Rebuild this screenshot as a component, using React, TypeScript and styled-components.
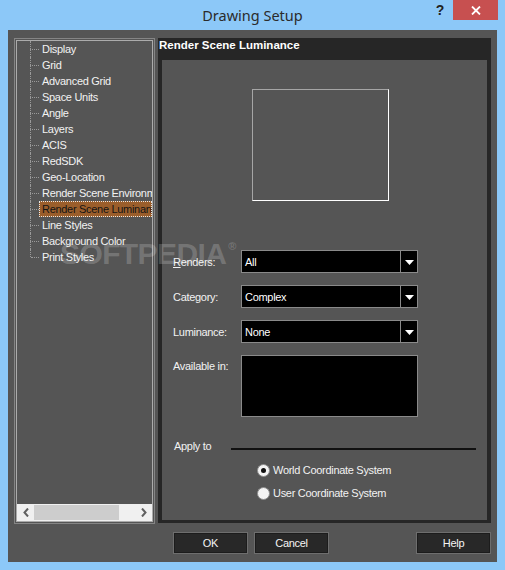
import React from "react";
import styled, { createGlobalStyle, css } from "styled-components";

const Global = createGlobalStyle`
  html, body { margin: 0; padding: 0; background: #8cc8f8; }
  body { font-family: "Liberation Sans", Arial, sans-serif; }
  * { box-sizing: border-box; }
`;

const Window = styled.div`
  position: relative;
  width: 505px;
  height: 570px;
  background: #8cc8f8;
  display: flex;
  flex-direction: column;
  overflow: hidden;
`;

const TitleBar = styled.div`
  height: 30px;
  flex: none;
  display: grid;
  grid-template-columns: 1fr auto 1fr;
  align-items: start;
`;

const TitleText = styled.div`
  font-family: "Noto Sans", "Open Sans", sans-serif;
  font-size: 14.5px;
  line-height: 30px;
  color: #2b2b2b;
`;

const Controls = styled.div`
  display: flex;
  justify-content: flex-end;
  padding-right: 7px;
`;

const HelpGlyph = styled.div`
  width: 26px;
  height: 20px;
  display: flex;
  align-items: center;
  justify-content: center;
  font-family: "Liberation Sans", Arial, sans-serif;
  font-weight: bold;
  font-size: 14px;
  color: #222;
`;

const CloseButton = styled.div`
  width: 45px;
  height: 20px;
  background: #c75050;
  display: flex;
  align-items: center;
  justify-content: center;
`;

const Client = styled.div`
  flex: 1;
  margin: 0 8px 8px;
  background: #555555;
  padding: 8px 6px 8px;
  display: flex;
  flex-direction: column;
  font-family: "Liberation Sans", Arial, sans-serif;
  font-size: 11px;
  letter-spacing: -0.3px;
  color: #f2f2f2;
`;

const Main = styled.div`
  height: 486px;
  display: flex;
  gap: 3px;
`;

const TreeFrame = styled.div`
  width: 141px;
  border: 1px solid #858585;
  padding: 1px;
  display: flex;
`;

const TreeInner = styled.div`
  flex: 1;
  border: 1px solid #ababab;
  display: flex;
  flex-direction: column;
  min-width: 0;
`;

const TreeList = styled.div`
  flex: 1;
  display: flex;
  flex-direction: column;
`;

const TreeRow = styled.div`
  height: 16px;
  display: flex;
  align-items: stretch;
  padding-left: 13px;
`;

const Connector = styled.div`
  width: 9px;
  flex: none;
  display: flex;
  flex-direction: column;
`;

const ConnTop = styled.div`
  height: 8px;
  border-left: 1px dotted #9a9a9a;
`;

const ConnBottom = styled.div<{ $last?: boolean }>`
  height: 8px;
  border-top: 1px dotted #9a9a9a;
  border-left: ${(p) => (p.$last ? "none" : "1px dotted #9a9a9a")};
  margin-left: ${(p) => (p.$last ? "1px" : "0")};
`;

const TreeLabel = styled.div<{ $selected?: boolean }>`
  flex: 1;
  min-width: 0;
  white-space: nowrap;
  overflow: hidden;
  padding-left: 3px;
  line-height: 16px;
  color: #f2f2f2;
  ${(p) =>
    p.$selected &&
    css`
      background: #9b5e2b;
      color: #141414;
      outline: 1px dotted #e8e8e8;
      outline-offset: -1px;
    `}
`;

const HScroll = styled.div`
  height: 17px;
  flex: none;
  background: #f0f0f0;
  display: flex;
  align-items: center;
`;

const ScrollArrow = styled.div`
  width: 17px;
  height: 17px;
  display: flex;
  align-items: center;
  justify-content: center;
`;

const ScrollThumb = styled.div`
  width: 85px;
  height: 15px;
  background: #cdcdcd;
`;

const ScrollSpace = styled.div`
  flex: 1;
`;

const Panel = styled.div`
  width: 333px;
  height: 485px;
  background: #262626;
  display: flex;
  flex-direction: column;
`;

const PanelTitle = styled.div`
  height: 22px;
  flex: none;
  padding-left: 1px;
  font-weight: bold;
  font-size: 11.5px;
  letter-spacing: 0;
  line-height: 15px;
  color: #ffffff;
`;

const PanelBody = styled.div`
  flex: 1;
  margin: 0 4px 3px;
  background: #555555;
  display: flex;
  flex-direction: column;
`;

const Preview = styled.div`
  margin: 29px 0 0 90px;
  width: 137px;
  height: 112px;
  border-top: 1px solid #a6a6a6;
  border-left: 1px solid #a6a6a6;
  border-right: 1px solid #ffffff;
  border-bottom: 1px solid #ffffff;
`;

const Form = styled.div`
  margin-top: 49px;
  padding-left: 11px;
  display: grid;
  grid-template-columns: 68px 177px;
  row-gap: 12px;
`;

const Label = styled.div<{ $top?: boolean }>`
  align-self: ${(p) => (p.$top ? "start" : "center")};
  padding-top: ${(p) => (p.$top ? "4px" : "0")};
  line-height: 14px;
`;

const Combo = styled.div`
  height: 23px;
  display: flex;
`;

const ComboField = styled.div`
  flex: 1;
  background: #000;
  border: 1px solid #8a8a8a;
  padding-left: 3px;
  display: flex;
  align-items: center;
  color: #ffffff;
`;

const ComboButton = styled.div`
  width: 18px;
  background: #000;
  border: 1px solid #8a8a8a;
  margin-left: -1px;
  display: flex;
  align-items: center;
  justify-content: center;
  padding-top: 1px;
`;

const ListBox = styled.div`
  height: 62px;
  background: #000;
  border: 1px solid #8a8a8a;
`;

const ApplyRow = styled.div`
  margin-top: 22px;
  padding-left: 12px;
  height: 14px;
  display: flex;
  align-items: flex-start;
`;

const ApplyLabel = styled.div`
  width: 57px;
  line-height: 14px;
`;

const Rule = styled.div`
  width: 245px;
  height: 2px;
  margin-top: 9px;
  background: #111111;
`;

const RadioGroup = styled.div`
  margin-top: 9px;
  padding-left: 95px;
  display: flex;
  flex-direction: column;
  gap: 7px;
`;

const RadioRow = styled.div`
  height: 16px;
  display: flex;
  align-items: center;
  gap: 3px;
`;

const RadioCircle = styled.div<{ $checked?: boolean }>`
  width: 13px;
  height: 13px;
  border-radius: 50%;
  background: #f4f4f4;
  border: 1px solid #8c8c8c;
  display: flex;
  align-items: center;
  justify-content: center;
  &::after {
    content: "";
    width: 5px;
    height: 5px;
    border-radius: 50%;
    background: ${(p) => (p.$checked ? "#111" : "transparent")};
  }
`;

const ButtonRow = styled.div`
  margin-top: 8px;
  height: 22px;
  display: flex;
  gap: 6px;
  padding-left: 159px;
`;

const DlgButton = styled.div<{ $push?: boolean }>`
  width: 75px;
  height: 22px;
  background: #282828;
  border: 1px solid #6e6e6e;
  box-shadow: inset 0 0 0 1px #1c1c1c;
  display: flex;
  align-items: center;
  justify-content: center;
  color: #f4f4f4;
  margin-left: ${(p) => (p.$push ? "auto" : "0")};
`;

const Watermark = styled.div`
  position: absolute;
  left: 60px;
  top: 239px;
  font-family: "Liberation Sans", Arial, sans-serif;
  font-weight: bold;
  font-size: 30px;
  line-height: 30px;
  letter-spacing: -0.6px;
  color: rgba(255, 255, 255, 0.2);
  pointer-events: none;
  white-space: nowrap;
`;

const WatermarkReg = styled.span`
  font-size: 11px;
  vertical-align: top;
  margin-left: 2px;
  line-height: 14px;
`;

const Arrow = () => (
  <svg width="9" height="5" viewBox="0 0 9 5">
    <polygon points="0,0 9,0 4.5,5" fill="#ffffff" />
  </svg>
);

const Chevron = ({ dir }: { dir: "left" | "right" }) => (
  <svg width="6" height="9" viewBox="0 0 6 9">
    <polyline
      points={dir === "left" ? "5,0.5 1.5,4.5 5,8.5" : "1,0.5 4.5,4.5 1,8.5"}
      fill="none"
      stroke="#606060"
      strokeWidth="2"
    />
  </svg>
);

const treeItems = [
  "Display",
  "Grid",
  "Advanced Grid",
  "Space Units",
  "Angle",
  "Layers",
  "ACIS",
  "RedSDK",
  "Geo-Location",
  "Render Scene Environment",
  "Render Scene Luminance",
  "Line Styles",
  "Background Color",
  "Print Styles",
];

export default function App() {
  return (
    <>
      <Global />
      <Window>
        <TitleBar>
          <div />
          <TitleText>Drawing Setup</TitleText>
          <Controls>
            <HelpGlyph>?</HelpGlyph>
            <CloseButton>
              <svg width="10" height="9" viewBox="0 0 10 9">
                <path d="M1 0.5 L9 8.5 M9 0.5 L1 8.5" stroke="#ffffff" strokeWidth="1.8" />
              </svg>
            </CloseButton>
          </Controls>
        </TitleBar>
        <Client>
          <Main>
            <TreeFrame>
              <TreeInner>
                <TreeList>
                  {treeItems.map((t, i) => (
                    <TreeRow key={t}>
                      <Connector>
                        <ConnTop />
                        <ConnBottom $last={i === treeItems.length - 1} />
                      </Connector>
                      <TreeLabel $selected={t === "Render Scene Luminance"}>{t}</TreeLabel>
                    </TreeRow>
                  ))}
                </TreeList>
                <HScroll>
                  <ScrollArrow>
                    <Chevron dir="left" />
                  </ScrollArrow>
                  <ScrollThumb />
                  <ScrollSpace />
                  <ScrollArrow>
                    <Chevron dir="right" />
                  </ScrollArrow>
                </HScroll>
              </TreeInner>
            </TreeFrame>
            <Panel>
              <PanelTitle>Render Scene Luminance</PanelTitle>
              <PanelBody>
                <Preview />
                <Form>
                  <Label>
                    <u>R</u>enders:
                  </Label>
                  <Combo>
                    <ComboField>All</ComboField>
                    <ComboButton>
                      <Arrow />
                    </ComboButton>
                  </Combo>
                  <Label>Category:</Label>
                  <Combo>
                    <ComboField>Complex</ComboField>
                    <ComboButton>
                      <Arrow />
                    </ComboButton>
                  </Combo>
                  <Label>Luminance:</Label>
                  <Combo>
                    <ComboField>None</ComboField>
                    <ComboButton>
                      <Arrow />
                    </ComboButton>
                  </Combo>
                  <Label $top>Available in:</Label>
                  <ListBox />
                </Form>
                <ApplyRow>
                  <ApplyLabel>Apply to</ApplyLabel>
                  <Rule />
                </ApplyRow>
                <RadioGroup>
                  <RadioRow>
                    <RadioCircle $checked />
                    World Coordinate System
                  </RadioRow>
                  <RadioRow>
                    <RadioCircle />
                    User Coordinate System
                  </RadioRow>
                </RadioGroup>
              </PanelBody>
            </Panel>
          </Main>
          <ButtonRow>
            <DlgButton>OK</DlgButton>
            <DlgButton>Cancel</DlgButton>
            <DlgButton $push>Help</DlgButton>
          </ButtonRow>
        </Client>
        <Watermark>
          SOFTPEDIA<WatermarkReg>®</WatermarkReg>
        </Watermark>
      </Window>
    </>
  );
}
